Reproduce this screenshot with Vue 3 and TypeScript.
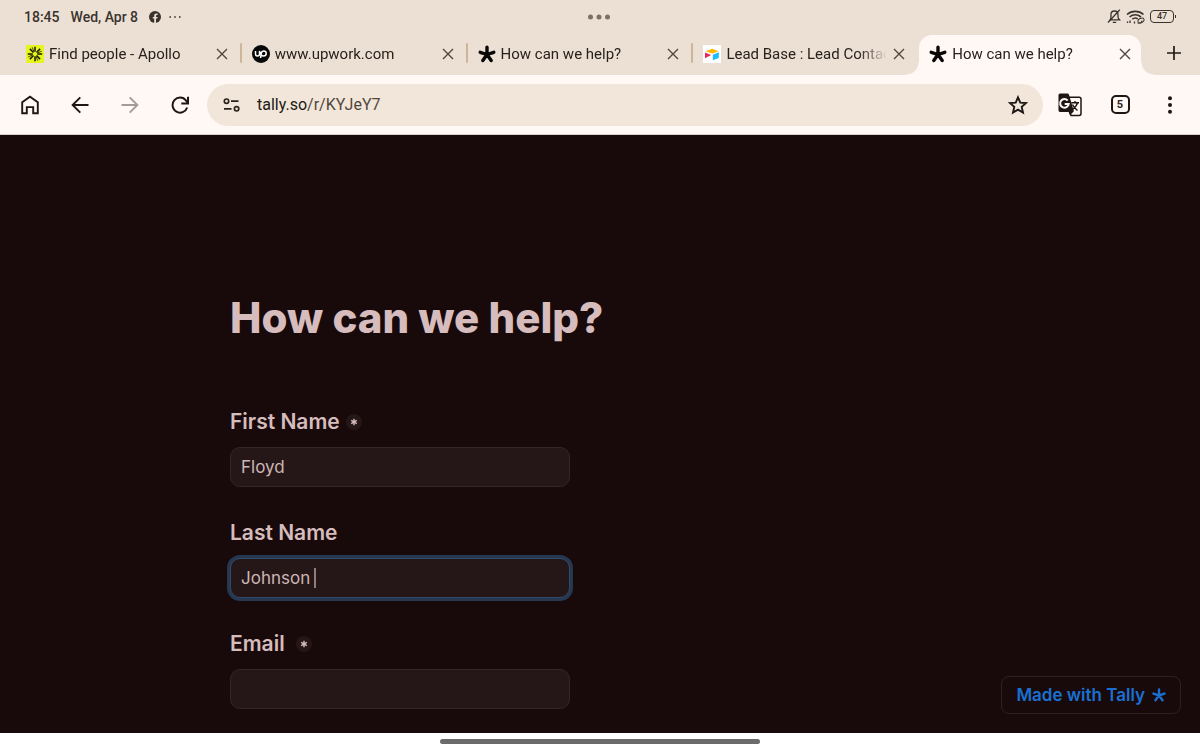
<script setup lang="ts">
import { ref } from 'vue'

interface Tab {
  id: number
  title: string
  icon: 'apollo' | 'upwork' | 'tally' | 'airtable'
  active?: boolean
}

interface Field {
  id: string
  label: string
  value: string
  required: boolean
  editing: boolean
}

const tabs: Tab[] = [
  { id: 1, title: 'Find people - Apollo', icon: 'apollo' },
  { id: 2, title: 'www.upwork.com', icon: 'upwork' },
  { id: 3, title: 'How can we help?', icon: 'tally' },
  { id: 4, title: 'Lead Base : Lead Contac', icon: 'airtable' },
  { id: 5, title: 'How can we help?', icon: 'tally', active: true },
]

const fields = ref<Field[]>([
  { id: 'first-name', label: 'First Name', value: 'Floyd', required: true, editing: false },
  { id: 'last-name', label: 'Last Name', value: 'Johnson ', required: false, editing: true },
  { id: 'email', label: 'Email\u00a0', value: '', required: true, editing: false },
])
</script>

<template>
  <div class="screen">
    <header class="status">
      <div class="status-left">
        <span>18:45</span>
        <span>Wed, Apr 8</span>
        <svg class="fb" viewBox="0 0 12 12" width="12" height="12" aria-hidden="true">
          <circle cx="6" cy="6" r="6" fill="#3a332d" />
          <path d="M5.2 12V7.6H3.8V6h1.4V4.8c0-1.5.8-2.3 2.2-2.3h1.2V4H7.8c-.6 0-.8.3-.8.8V6h1.600l-.3 1.600H7V12z" fill="#ece0d4" />
        </svg>
        <svg viewBox="0 0 12 4" width="12" height="4" fill="#5a524a" aria-hidden="true">
          <circle cx="1.200" cy="2" r="1" /><circle cx="6" cy="2" r="1" /><circle cx="10.800" cy="2" r="1" />
        </svg>
      </div>
      <svg class="handle" viewBox="0 0 22 6" width="22" height="6" fill="#7b7066" aria-hidden="true">
        <circle cx="2.500" cy="3" r="2.500" /><circle cx="11" cy="3" r="2.500" /><circle cx="19.500" cy="3" r="2.500" />
      </svg>
      <div class="status-right">
        <svg viewBox="0 0 14 15" width="14" height="15" fill="none" stroke="#3a332d" stroke-width="1.300" aria-hidden="true">
          <path d="M3.200 10.800h9.300c-1-1-1.500-1.700-1.500-3V5.500C11 3.300 9.500 2 7.500 2S4 3.300 4 5.500v2.300c0 1.300-.2 2-.8 3z" />
          <path d="M5.800 13.300h3.400M12.800.8L1 13.500" />
        </svg>
        <svg viewBox="0 0 19 14" width="19" height="14" fill="none" stroke="#3a332d" aria-hidden="true">
          <path d="M1 4.500C5.500.2 13 .2 17.500 4.500M3.600 7c3.200-3 8-3 11.300 0" stroke-width="1.700" />
          <path d="M6.200 9.300c1.700-1.500 4-1.600 5.500-.5" stroke-width="1.500" />
          <path d="M1.500 13v-1.500M4 13v-2.500M8.500 11.500v2" stroke-width="1.300" />
          <ellipse cx="15" cy="10.500" rx="3.200" ry="2.200" transform="rotate(-25 15 10.500)" />
          <path d="M11.500 13c2 .8 4-.2 4.500-2.500" />
        </svg>
        <span class="battery">47</span>
      </div>
    </header>

    <nav class="tabs" aria-label="Open tabs">
      <div v-for="tab in tabs" :key="tab.id" class="tab" :class="{ active: tab.active }">
        <button class="tab-main" type="button">
          <svg v-if="tab.icon === 'apollo'" viewBox="0 0 18 18" width="18" height="18" aria-hidden="true">
            <rect width="18" height="18" rx="1.500" fill="#e6f51c" />
            <path d="M9 1.800v5M9 11.200v5M1.800 9h5M11.200 9h5M3.900 3.900l3.600 3.600M10.500 10.500l3.600 3.600M14.100 3.900l-3.600 3.600M7.500 10.500l-3.600 3.600" stroke="#191b08" stroke-width="1.500" />
            <path d="M6.200 2.300L8 6.700M10 11.300l1.800 4.400M15.700 6.200L11.300 8M6.700 10l-4.400 1.800" stroke="#191b08" stroke-width=".8" />
          </svg>
          <svg v-else-if="tab.icon === 'upwork'" viewBox="0 0 18 18" width="18" height="18" fill="none" aria-hidden="true">
            <circle cx="9" cy="9" r="9" fill="#080808" />
            <path d="M3.500 6v3c0 2.700 4 2.700 4 0V6c.8 3 2 5 4 5 1.500 0 2.700-1 2.700-2.500S13.200 6 11.800 6c-1.600 0-2.300 1-2.600 2.600L8.600 13" stroke="#fff" stroke-width="1.500" />
          </svg>
          <svg v-else-if="tab.icon === 'tally'" viewBox="0 0 18 18" width="18" height="18" aria-hidden="true">
            <path d="M9 9.500V2.300M9 9.500L2.200 7.300M9 9.500l6.800-2.200M9 9.500l-4.200 6M9 9.500l4.200 6" stroke="#080606" stroke-width="3.400" stroke-linecap="round" />
          </svg>
          <svg v-else viewBox="0 0 18 18" width="18" height="18" aria-hidden="true">
            <rect width="18" height="18" fill="#fff" />
            <path d="M2.500 6.300L8.500 4q.7-.3 1.400 0l5.600 2.200-6.100 2.400z" fill="#fcb400" />
            <path d="M9.800 9.700l6-2.400v5.600l-6 2.400z" fill="#18bfff" />
            <path d="M2 7.500l6.200 2.600L2 13.200z" fill="#e52a5b" />
          </svg>
          <span class="tab-title">{{ tab.title }}</span>
        </button>
        <button class="tab-close" type="button" aria-label="Close tab">
          <svg viewBox="0 0 12 12" width="12" height="12" aria-hidden="true">
            <path d="M1 1l10 10M11 1L1 11" stroke="#51463d" stroke-width="1.400" />
          </svg>
        </button>
      </div>
      <button class="new-tab" type="button" aria-label="New tab">
        <svg viewBox="0 0 14 14" width="14" height="14" aria-hidden="true">
          <path d="M7 0v14M0 7h14" stroke="#201a15" stroke-width="1.700" />
        </svg>
      </button>
    </nav>

    <div class="toolbar">
      <button class="tool" type="button" aria-label="Home">
        <svg viewBox="0 0 20 20" width="20" height="20" fill="none" stroke="#1c1714" stroke-width="1.900" aria-hidden="true">
          <path d="M2.200 18.300V7.200L10 1.700l7.800 5.500v11.100h-4.600v-6.200H6.800v6.200z" />
        </svg>
      </button>
      <button class="tool" type="button" aria-label="Back">
        <svg viewBox="0 0 18 18" width="18" height="18" fill="none" stroke="#1c1714" stroke-width="1.900" aria-hidden="true">
          <path d="M17.500 9H2M9.300 1.300L1.600 9l7.700 7.700" />
        </svg>
      </button>
      <button class="tool" type="button" aria-label="Forward" disabled>
        <svg viewBox="0 0 18 18" width="18" height="18" fill="none" stroke="#a29b97" stroke-width="1.900" aria-hidden="true">
          <path d="M.5 9H16M8.700 1.300L16.400 9l-7.700 7.700" />
        </svg>
      </button>
      <button class="tool" type="button" aria-label="Reload">
        <svg viewBox="0 0 18 18" width="18" height="18" fill="none" stroke="#1c1714" stroke-width="2" aria-hidden="true">
          <path d="M16.200 11.500A7.500 7.500 0 1 1 15 4.500l1.500 2.200" />
          <path d="M17 .8v6.700h-6.700" />
        </svg>
      </button>
      <div class="omnibox">
        <button class="box-button" type="button" aria-label="Site information">
          <svg viewBox="0 0 18 14" width="18" height="14" fill="none" stroke="#2a231d" stroke-width="1.700" aria-hidden="true">
            <circle cx="3.500" cy="3.200" r="2.200" /><path d="M8 3.200h7.500M1 10.800h7.500" /><circle cx="13.600" cy="10.800" r="2.200" />
          </svg>
        </button>
        <span class="url"><span class="host">tally.so</span>/r/KYJeY7</span>
        <button class="box-button star" type="button" aria-label="Bookmark">
          <svg viewBox="0 0 20 20" width="20" height="20" fill="none" stroke="#1c1714" stroke-width="1.900" aria-hidden="true">
            <path d="M10 2.300l2.300 5.300 5.700.5-4.300 3.800 1.300 5.700-5-3-5 3 1.300-5.700L2 8.100l5.700-.5z" />
          </svg>
        </button>
      </div>
      <button class="tool" type="button" aria-label="Translate">
        <svg viewBox="0 0 24 24" width="24" height="24" fill="none" aria-hidden="true">
          <path d="M11 4.200h10.200q1.800 0 1.800 1.800v14.600q0 1.900-1.800 1.900H13L11 17z" stroke="#1c1714" stroke-width="1.500" />
          <path d="M2 .5h7.500q1 0 1.400 1l5 16.700-3.900 4.100-1.400-3.400H2Q.5 18.900.5 17.300V2Q.5.500 2 .5z" fill="#1c1714" />
          <path d="M9.700 7.600A4.300 4.300 0 1 0 10.700 11H6.700" stroke="#fff8f5" stroke-width="2" />
          <path d="M13.300 9.700h7.700M17 8v1.700M19.500 9.700c-.6 3-2.800 5.200-5 6.800M14.500 11.500c1 2.500 3 4.500 5 6" stroke="#1c1714" stroke-width="1.400" />
        </svg>
      </button>
      <button class="tool" type="button" aria-label="Switch tabs"><span class="count">5</span></button>
      <button class="tool" type="button" aria-label="More">
        <svg viewBox="0 0 4 18" width="4" height="18" fill="#1c1714" aria-hidden="true">
          <circle cx="2" cy="2.200" r="2" /><circle cx="2" cy="9" r="2" /><circle cx="2" cy="15.800" r="2" />
        </svg>
      </button>
    </div>

    <main class="page">
      <form class="form" @submit.prevent>
        <h1>How can we help?</h1>
        <div v-for="field in fields" :key="field.id" class="field">
          <div class="label-row">
            <label :for="field.id">{{ field.label }}</label>
            <span v-if="field.required" class="required">
              <svg viewBox="0 0 8 8" width="8" height="8" aria-hidden="true">
                <path d="M4 .7v6.600M1.200 2.300l5.600 3.400M6.800 2.300L1.200 5.700" stroke="#d6bcbc" stroke-width="1.400" />
              </svg>
            </span>
          </div>
          <div class="control" :class="{ editing: field.editing }">
            <input :id="field.id" v-model="field.value" type="text" autocomplete="off" />
            <span v-if="field.editing" class="caret"></span>
          </div>
        </div>
      </form>
      <a class="made" href="#">
        <span>Made with Tally</span>
        <svg viewBox="0 0 14 14" width="14" height="14" aria-hidden="true">
          <path d="M7 7.400V1.400M7 7.400L1.500 5.600M7 7.400l5.500-1.800M7 7.400l-3.500 4.800M7 7.400l3.500 4.800" stroke="#1a70d2" stroke-width="2.400" stroke-linecap="round" />
        </svg>
      </a>
    </main>
    <footer class="gesture"><span></span></footer>
  </div>
</template>

<style>
body {
  margin: 0;
  background: #180a0b;
}
</style>

<style scoped>
.screen {
  display: flex;
  flex-direction: column;
  min-height: 100vh;
  background: #ece0d5;
  color: #29211b;
  font-family: Roboto, "Liberation Sans", sans-serif;
}
button {
  display: flex;
  align-items: center;
  justify-content: center;
  padding: 0;
  border: 0;
  background: none;
  color: inherit;
  font: inherit;
}
.status {
  display: grid;
  grid-template-columns: 1fr auto 1fr;
  align-items: center;
  height: 33px;
  padding: 0 26px 0 24px;
  color: #3a332d;
  font-size: 14px;
  font-weight: 500;
}
.status-left,
.status-right {
  display: flex;
  align-items: center;
}
.status-left span {
  margin-right: 11px;
}
.fb {
  margin-right: 8px;
}
.status-right {
  justify-content: flex-end;
  gap: 5px;
}
.battery {
  position: relative;
  width: 22px;
  height: 11px;
  border: 1px solid #3a332d;
  border-radius: 4px;
  font-size: 9px;
  line-height: 11px;
  text-align: center;
}
.battery::after {
  content: "";
  position: absolute;
  top: 4px;
  right: -3px;
  width: 1px;
  height: 3px;
  background: #3a332d;
}
.tabs {
  display: flex;
  height: 40px;
  padding: 2px 0 0 14px;
}
.tab {
  position: relative;
  display: flex;
  flex: 1;
  align-items: center;
  min-width: 0;
  padding: 0 6px 2px 12px;
}
.tab + .tab:not(.active)::before {
  content: "";
  position: absolute;
  top: 8px;
  left: 0;
  width: 2px;
  height: 20px;
  border-radius: 1px;
  background: #cdb598;
}
.tab.active::before {
  content: "";
  position: absolute;
  inset: 0 2px;
  border-radius: 13px 13px 0 0;
  background: #fff8f5;
}
.tab.active::after {
  content: "";
  position: absolute;
  right: -11px;
  bottom: 0;
  left: -11px;
  height: 13px;
  background:
    radial-gradient(circle at 0 0, transparent 12px, #fff8f5 13px) left / 13px 13px no-repeat,
    radial-gradient(circle at 100% 0, transparent 12px, #fff8f5 13px) right / 13px 13px no-repeat;
}
.tab > button {
  position: relative;
}
.tab-main {
  flex: 1;
  gap: 5px;
  min-width: 0;
}
.tab-main svg {
  flex: none;
}
.tab-title {
  flex: 1;
  overflow: hidden;
  font-size: 15px;
  line-height: 20px;
  text-align: left;
  white-space: nowrap;
  mask-image: linear-gradient(to right, #000 calc(100% - 28px), transparent);
}
.tab-close {
  width: 24px;
  height: 24px;
}
.new-tab {
  width: 57px;
  height: 36px;
  padding-left: 6px;
}
.toolbar {
  display: flex;
  align-items: center;
  height: 59px;
  padding: 0 5px;
  border-bottom: 1px solid #d9d0cb;
  background: #fff8f5;
}
.tool {
  width: 50px;
  height: 42px;
}
.omnibox {
  display: flex;
  flex: 1;
  align-items: center;
  height: 42px;
  margin: 0 2px;
  padding: 0 15px 0 16px;
  border-radius: 21px;
  background: #f2e6da;
}
.url {
  flex: 1;
  margin-left: 16px;
  color: #51463d;
  font-size: 16px;
  line-height: 22px;
}
.host {
  color: #201a15;
}
.count {
  width: 15px;
  height: 15px;
  border: 2px solid #1c1714;
  border-radius: 5px;
  font-size: 11px;
  font-weight: 700;
  line-height: 15px;
}
.page {
  position: relative;
  flex: 1;
  padding: 155px 24px 24px;
  background: #180a0b;
  color: #d6bcbc;
  font-family: Inter, "Liberation Sans", sans-serif;
}
.form {
  max-width: 740px;
  margin: 0 auto;
}
h1 {
  margin: 0 0 62px;
  font-size: 42px;
  font-weight: 800;
  line-height: 56px;
}
.field + .field {
  margin-top: 32px;
}
.label-row {
  display: flex;
  align-items: center;
  gap: 6px;
  height: 28px;
  margin-bottom: 11px;
  font-size: 21px;
  font-weight: 600;
  line-height: 28px;
}
.required {
  display: flex;
  align-items: center;
  justify-content: center;
  width: 16px;
  height: 16px;
  border-radius: 50%;
  background: #251718;
}
.control {
  position: relative;
  max-width: 340px;
}
input {
  display: block;
  box-sizing: border-box;
  width: 100%;
  height: 40px;
  padding: 0 10px;
  border: 1px solid #342526;
  border-radius: 10px;
  outline: 0;
  background: #251718;
  color: #cdb6b5;
  font: 17px/24px Inter, "Liberation Sans", sans-serif;
}
.editing input {
  border-color: #2f4a6c;
  box-shadow: 0 0 0 3px #26384f;
}
.caret {
  position: absolute;
  top: 10px;
  left: 84px;
  width: 2px;
  height: 20px;
  background: #8f7d7d;
}
.made {
  position: absolute;
  right: 19px;
  bottom: 19px;
  display: flex;
  align-items: center;
  gap: 7px;
  height: 36px;
  padding: 0 14px;
  border: 1px solid #301f20;
  border-radius: 8px;
  color: #1a70d2;
  font-size: 17px;
  font-weight: 600;
  text-decoration: none;
}
.gesture {
  display: flex;
  align-items: center;
  justify-content: center;
  height: 17px;
  background: #fff;
}
.gesture span {
  width: 320px;
  height: 5px;
  border-radius: 3px;
  background: #6b6b6b;
}
</style>
